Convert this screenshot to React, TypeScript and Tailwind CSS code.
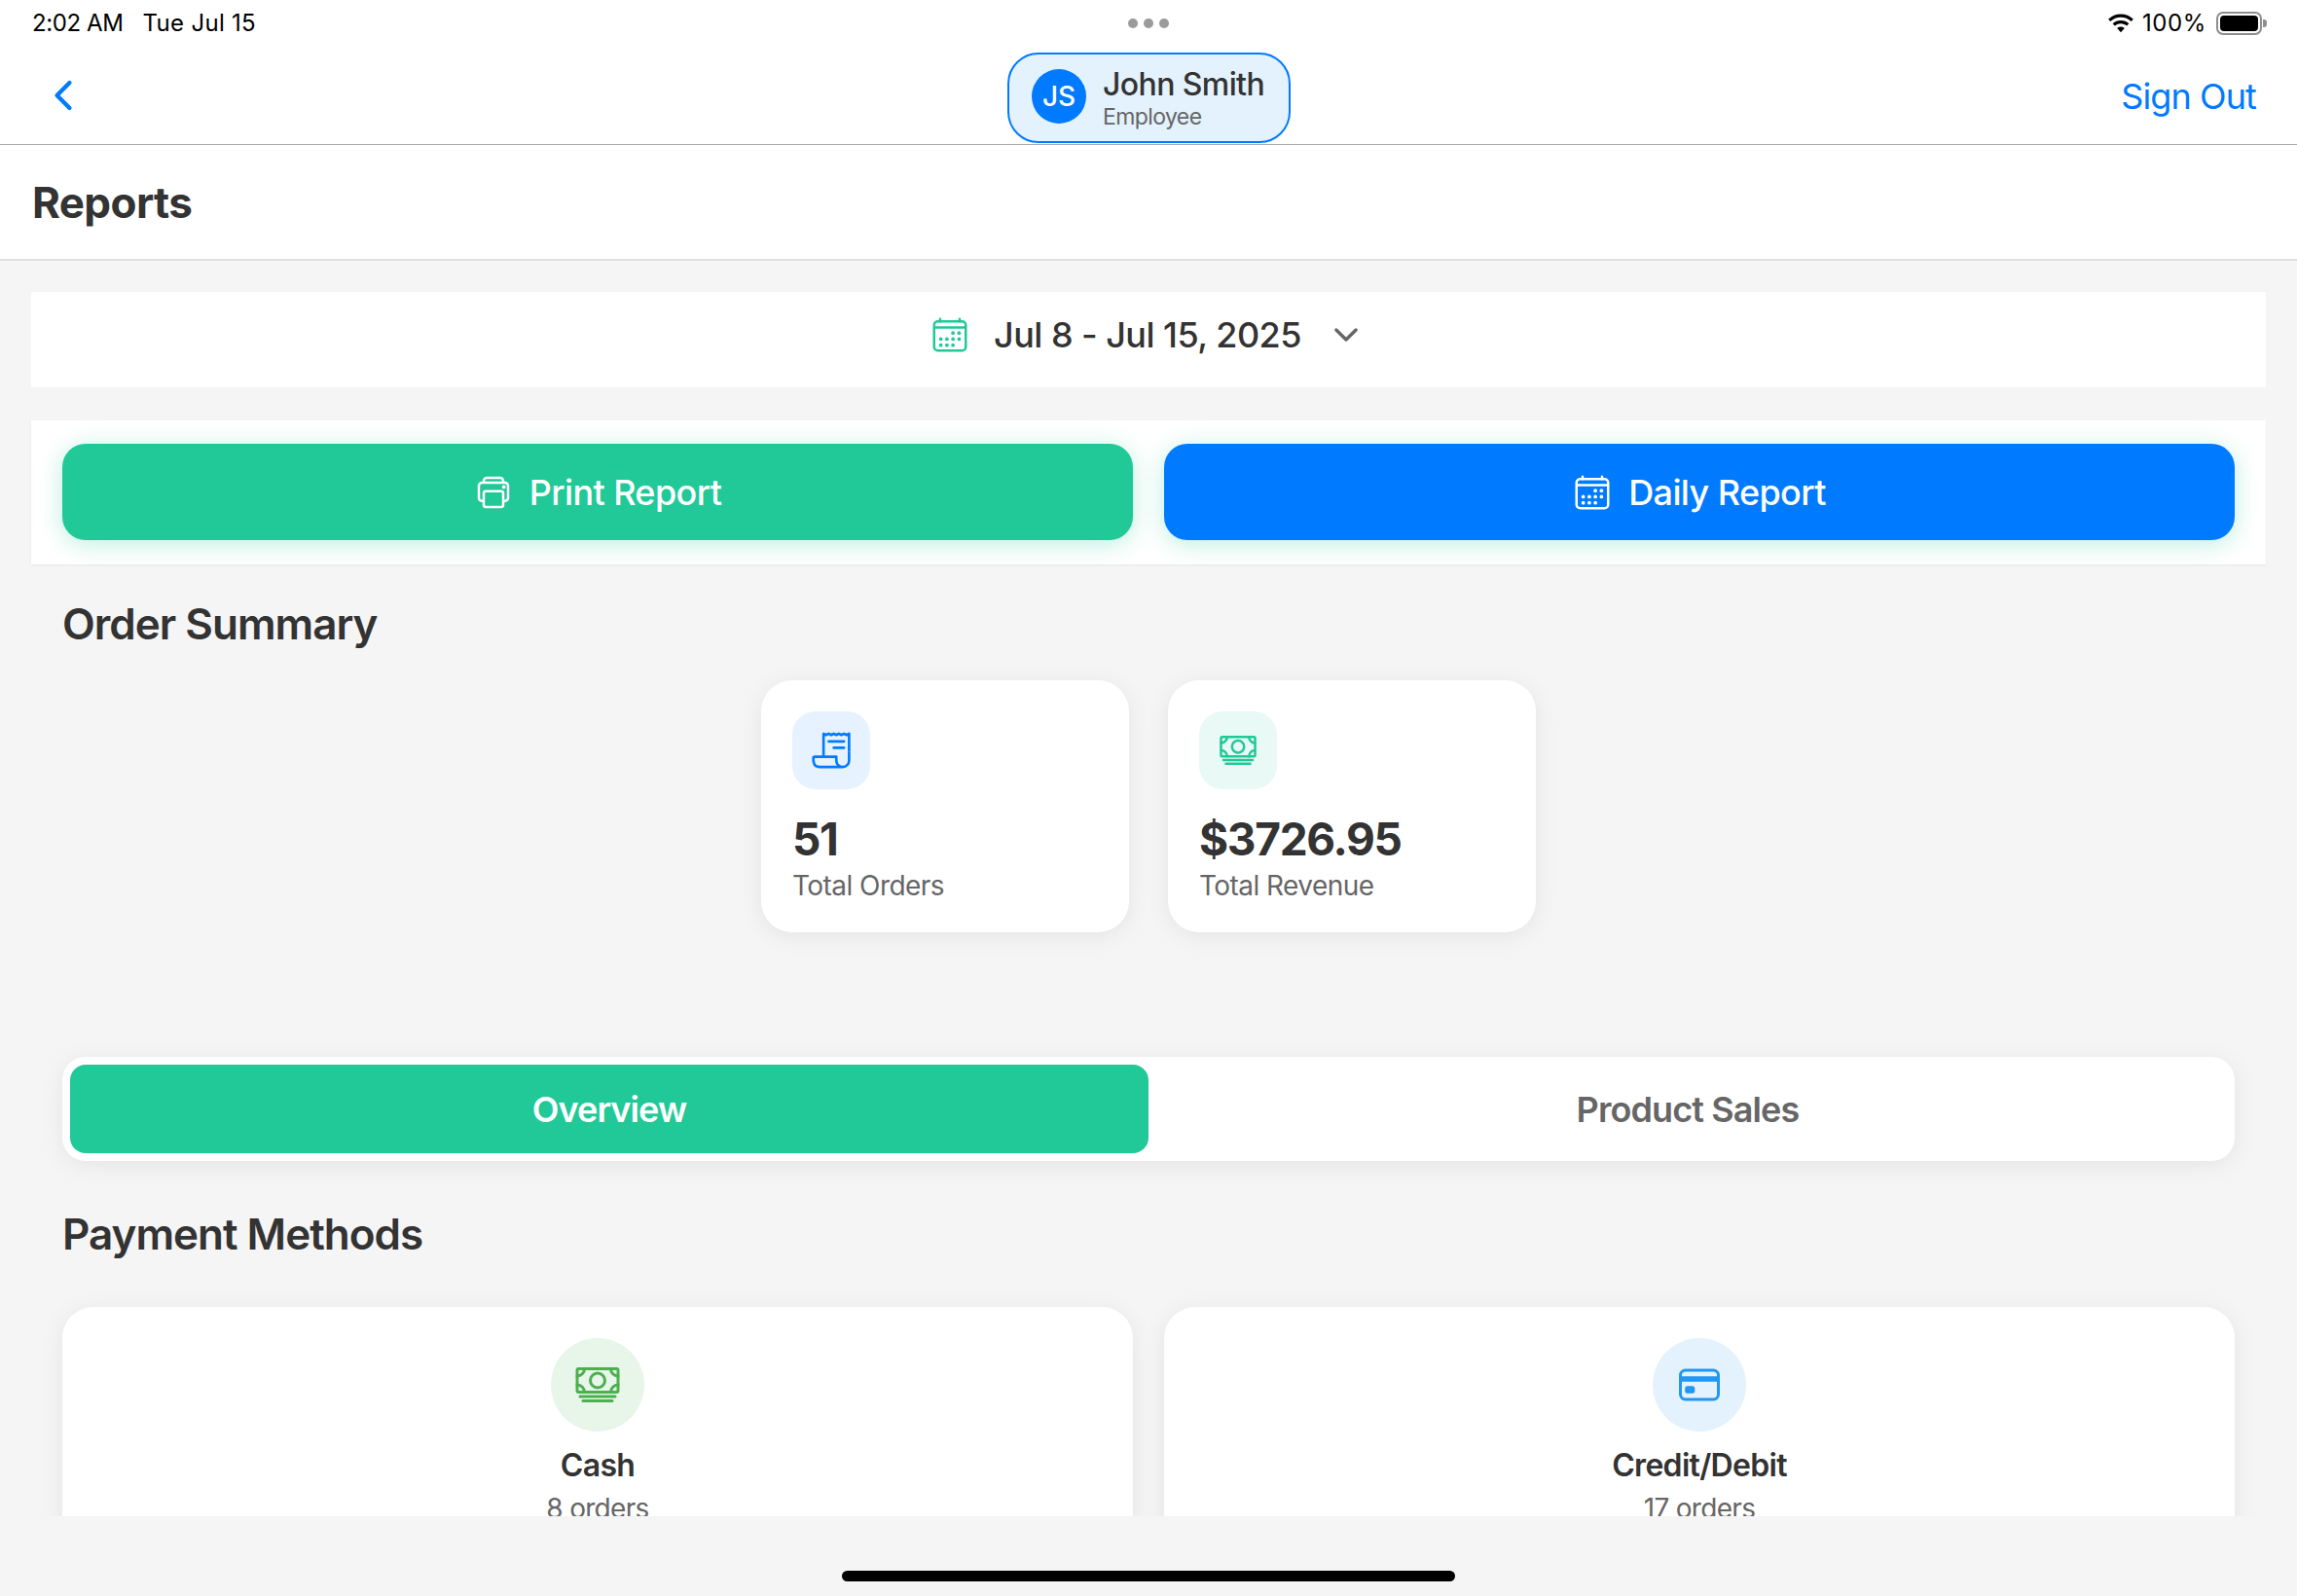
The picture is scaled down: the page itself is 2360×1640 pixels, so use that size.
import {
  IoCalendarOutline,
  IoCardOutline,
  IoCashOutline,
  IoChevronBack,
  IoChevronDown,
  IoPrintOutline,
  IoReceiptOutline,
} from "react-icons/io5";

const StatusBar = () => (
  <div className="relative h-[48px] flex items-center justify-between pl-[33px] pr-[31px] text-[24px] leading-[48px] text-black">
    <div className="flex gap-[20px]">
      <span className="tracking-[-0.4px]">2:02 AM</span>
      <span className="tracking-[0.3px]">Tue Jul 15</span>
    </div>
    <div className="absolute left-[1159px] top-[19px] flex gap-[6px]">
      <div className="w-[10px] h-[10px] rounded-full bg-[#9b9b9b]" />
      <div className="w-[10px] h-[10px] rounded-full bg-[#9b9b9b]" />
      <div className="w-[10px] h-[10px] rounded-full bg-[#9b9b9b]" />
    </div>
    <div className="flex items-center">
      <svg width="28" height="20" viewBox="2 1 24 18" className="mr-[8px]">
        <path d="M14 4.4c3.7 0 7 1.4 9.6 3.8l2-2.1A17 17 0 0 0 14 1.5 17 17 0 0 0 2.4 6.1l2 2.1A14 14 0 0 1 14 4.4Z" fill="#000" />
        <path d="M14 10.2c2.1 0 4 .8 5.5 2.1l2-2.1A11 11 0 0 0 14 7.3a11 11 0 0 0-7.5 2.9l2 2.1a8 8 0 0 1 5.5-2.1Z" fill="#000" />
        <path d="M14 13.2c-1.3 0-2.5.5-3.4 1.3L14 18.3l3.4-3.8c-.9-.8-2.1-1.3-3.4-1.3Z" fill="#000" />
      </svg>
      <span className="tracking-[0.6px]">100%</span>
      <div className="ml-[10px] flex items-center">
        <div className="w-[47px] h-[24px] rounded-[7px] border-2 border-[#8e8e8e] p-[2px]">
          <div className="w-full h-full rounded-[4px] bg-black" />
        </div>
        <div className="ml-[1px] w-[4px] h-[8px] rounded-r-[3px] bg-[#8e8e8e]" />
      </div>
    </div>
  </div>
);

const Header = () => (
  <div className="bg-white border-b border-[#ababab]">
    <StatusBar />
    <div className="relative h-[100px] flex items-center justify-between pl-[42px] pr-[42px]">
      <IoChevronBack size={46} className="text-[#007aff]" />
      <div className="absolute left-[1035px] top-[6px] w-[291px] h-[93px] flex items-center gap-[17px] pl-[23px] rounded-[32px] border-2 border-[#007aff] bg-[#e3f2fd]">
        <div className="mb-[3px] w-[56px] h-[56px] rounded-full bg-[#007aff] flex items-center justify-center text-[28px] font-medium text-white">
          JS
        </div>
        <div className="pt-[1px]">
          <div className="text-[32px] leading-[38px] font-medium tracking-[-0.6px] text-[#333333]">John Smith</div>
          <div className="text-[23px] leading-[28px] tracking-[-0.6px] text-[#666666]">Employee</div>
        </div>
      </div>
      <span className="pt-[1px] text-[36px] tracking-[-0.9px] text-[#007aff]">Sign Out</span>
    </div>
  </div>
);

const StatCard = ({ icon, tile, value, label }: { icon: React.ReactNode; tile: string; value: string; label: string }) => (
  <div className="w-[378px] h-[259px] rounded-[32px] bg-white p-[32px] shadow-[0_4px_24px_rgba(0,0,0,0.07)]">
    <div className={`w-[80px] h-[80px] rounded-[24px] flex items-center justify-center ${tile}`}>{icon}</div>
    <div className="mt-[23px] text-[46px] leading-[57px] font-bold tracking-[-1.3px] text-[#333333]">{value}</div>
    <div className="mt-[2px] text-[28px] leading-[34px] tracking-[-0.55px] text-[#666666]">{label}</div>
  </div>
);

const PaymentCard = ({ icon, circle, name, orders }: { icon: React.ReactNode; circle: string; name: string; orders: string }) => (
  <div className="flex-1 h-[300px] rounded-[32px] bg-white pt-[32px] flex flex-col items-center shadow-[0_4px_24px_rgba(0,0,0,0.07)]">
    <div className={`w-[96px] h-[96px] rounded-full flex items-center justify-center ${circle}`}>{icon}</div>
    <div className="mt-[15px] text-[32px] leading-[40px] font-semibold tracking-[-0.7px] text-[#333333]">{name}</div>
    <div className="mt-[7px] text-[28px] leading-[34px] tracking-[-0.7px] text-[#666666]">{orders}</div>
  </div>
);

export default function App() {
  return (
    <div className="w-[2360px] h-[1640px] flex flex-col overflow-hidden bg-[#f5f5f5] [font-family:Inter,sans-serif]">
      <Header />

      <div className="h-[119px] shrink-0 bg-white border-b-2 border-[#e0e0e0] pl-[33px] flex items-center">
        <h1 className="text-[44px] leading-[52px] font-bold tracking-[-0.6px] text-[#333333]">Reports</h1>
      </div>

      <div className="flex-1 min-h-0 overflow-hidden">
        <div className="mx-[32px] mt-[32px] h-[98px] pb-[10px] pr-[3px] bg-white flex items-center justify-center">
          <IoCalendarOutline size={40} className="text-[#20c997]" />
          <span className="ml-[25px] text-[36px] font-medium tracking-[-0.55px] text-[#333333]">Jul 8 - Jul 15, 2025</span>
          <IoChevronDown size={36} className="ml-[28px] text-[#666666]" />
        </div>

        <div className="mx-[32px] mt-[34px] h-[148px] bg-white px-[32px] pt-[24px] flex gap-[32px] shadow-[0_1px_2px_rgba(0,0,0,0.06)]">
          <button className="flex-1 h-[99px] rounded-[24px] bg-[#20c997] flex items-center justify-center gap-[17px] text-[36px] font-medium tracking-[-0.6px] text-white shadow-[0_4px_24px_rgba(32,201,151,0.3)]">
            <IoPrintOutline size={40} />
            Print Report
          </button>
          <button className="flex-1 h-[99px] rounded-[24px] bg-[#007aff] flex items-center justify-center gap-[17px] text-[36px] font-medium tracking-[-0.6px] text-white shadow-[0_4px_24px_rgba(32,201,151,0.3)]">
            <IoCalendarOutline size={40} />
            Daily Report
          </button>
        </div>

        <div className="px-[64px]">
          <h2 className="mt-[35px] text-[44px] leading-[52px] font-semibold tracking-[-1px] text-[#333333]">Order Summary</h2>

          <div className="mt-[32px] flex justify-center gap-[40px]">
            <StatCard
              icon={<IoReceiptOutline size={42} className="text-[#007aff]" />}
              tile="bg-[#e6f2ff]"
              value="51"
              label="Total Orders"
            />
            <StatCard
              icon={<IoCashOutline size={40} className="text-[#20c997]" />}
              tile="bg-[#e9f9f5]"
              value="$3726.95"
              label="Total Revenue"
            />
          </div>

          <div className="mt-[128px] h-[107px] rounded-[24px] bg-white p-[8px] flex shadow-[0_4px_24px_rgba(0,0,0,0.07)]">
            <div className="flex-1 rounded-[16px] bg-[#20c997] flex items-center justify-center text-[36px] font-semibold tracking-[-0.9px] text-white">
              Overview
            </div>
            <div className="flex-1 rounded-[16px] flex items-center justify-center text-[36px] font-semibold tracking-[-0.9px] text-[#666666]">
              Product Sales
            </div>
          </div>

          <h2 className="mt-[49px] text-[44px] leading-[52px] font-semibold tracking-[-1px] text-[#333333]">Payment Methods</h2>

          <div className="mt-[49px] flex gap-[32px]">
            <PaymentCard
              icon={<IoCashOutline size={48} className="text-[#4caf50]" />}
              circle="bg-[#e8f5e9]"
              name="Cash"
              orders="8 orders"
            />
            <PaymentCard
              icon={<IoCardOutline size={48} className="text-[#2196f3]" />}
              circle="bg-[#e3f2fd]"
              name="Credit/Debit"
              orders="17 orders"
            />
          </div>
        </div>
      </div>

      <div className="h-[82px] shrink-0 pt-[56px] flex justify-center bg-[#f5f5f5]">
        <div className="w-[630px] h-[11px] rounded-full bg-black" />
      </div>
    </div>
  );
}
